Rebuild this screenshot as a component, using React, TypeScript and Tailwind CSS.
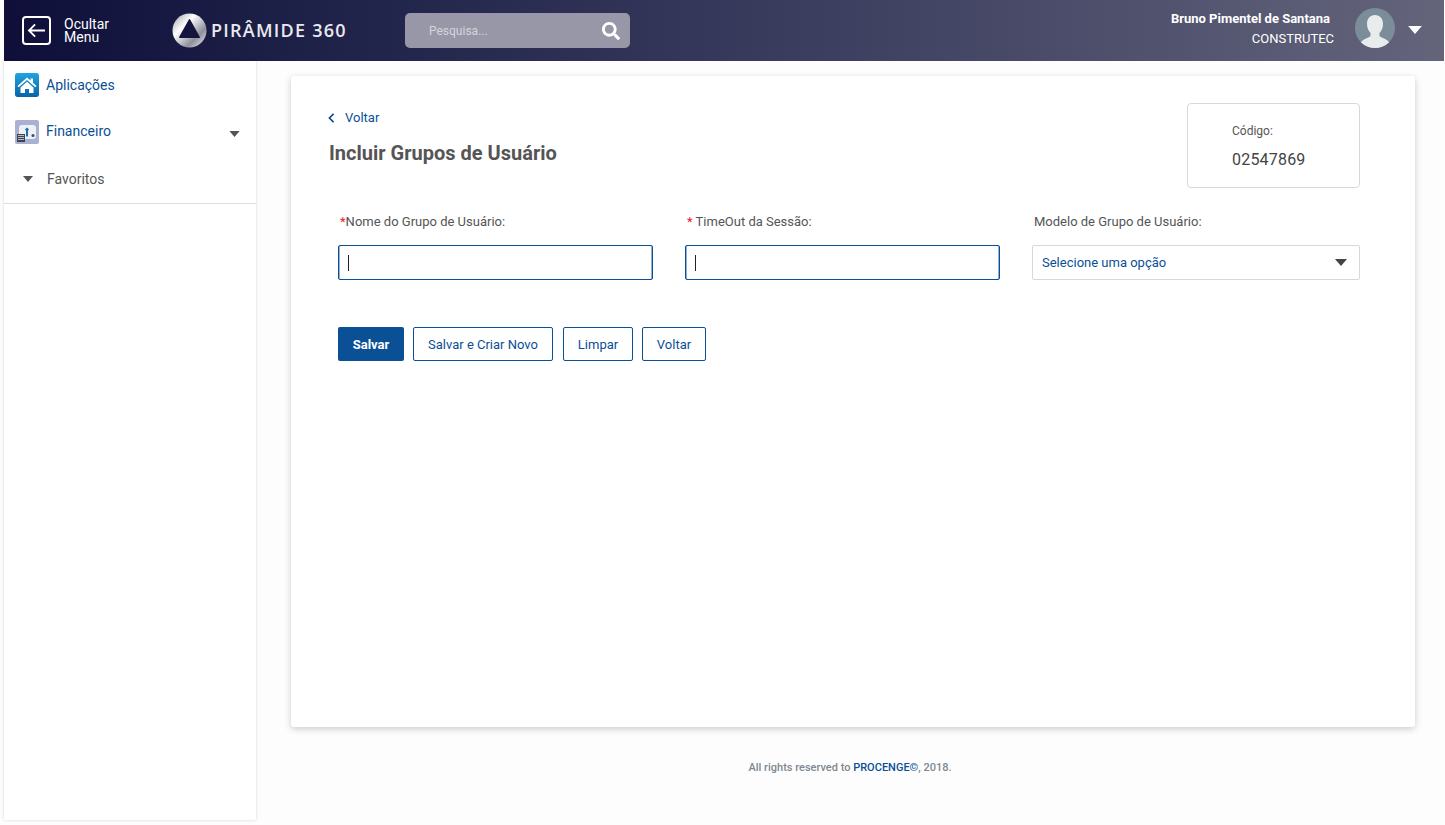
import { FaSearch } from "react-icons/fa";

function Caret({ className }: { className: string }) {
  return (
    <svg viewBox="0 0 12 7" className={className}>
      <path d="M0 0h12L6 7z" fill="currentColor" />
    </svg>
  );
}

function Logo() {
  return (
    <svg viewBox="0 0 36 36" className="w-[35px] h-[35px]">
      <defs>
        <linearGradient id="ring" x1="0" y1="0" x2="1" y2="1">
          <stop offset="0" stopColor="#9a9aa8" />
          <stop offset="0.35" stopColor="#ffffff" />
          <stop offset="0.7" stopColor="#8f8f9c" />
          <stop offset="1" stopColor="#f2f2f4" />
        </linearGradient>
      </defs>
      <circle cx="18" cy="18" r="17.5" fill="url(#ring)" />
      <path d="M18 7L28 25H8z" fill="#14143f" stroke="#14143f" strokeWidth="1.5" strokeLinejoin="round" />
    </svg>
  );
}

function HomeIcon() {
  return (
    <svg viewBox="0 0 24 24" className="w-6 h-6 rounded-[2px]">
      <defs>
        <linearGradient id="homeBg" x1="0" y1="0" x2="0" y2="1">
          <stop offset="0" stopColor="#20a4e0" />
          <stop offset="1" stopColor="#0a62a8" />
        </linearGradient>
      </defs>
      <rect width="24" height="24" rx="2" fill="url(#homeBg)" />
      <path d="M2.500 13L12 4.500l3.500 3V5.500h2.500v4.200L21.500 13l-1.200 1.200L12 7 3.700 14.200z" fill="#fff" />
      <path d="M5.500 14.500L12 8.800l6.500 5.700V20h-4.500v-4h-4v4H5.500z" fill="#fff" />
    </svg>
  );
}

function FinanceIcon() {
  return (
    <svg viewBox="0 0 24 24" className="w-6 h-6">
      <rect width="24" height="24" rx="2" fill="#a9b0d2" />
      <rect x="4" y="5" width="17" height="14" rx="3" fill="#eef0f6" />
      <path d="M10 9.500l2-2 2 2-1 1v6h-2v-6z" fill="#1d6fa8" />
      <circle cx="18" cy="15.500" r="1.500" fill="#2a4f7c" />
      <rect x="2" y="14" width="8" height="8" fill="#3c4352" />
      <path d="M3 15.500h6M3 17.500h6M3 19.500h6" stroke="#d7dbe6" strokeWidth="0.8" />
    </svg>
  );
}

function Avatar() {
  return (
    <svg viewBox="0 0 40 40" className="w-10 h-10 rounded-full">
      <rect width="40" height="40" fill="#7a8d99" />
      <path
        d="M20 7c5 0 8 3.500 8 9 0 4-1.500 7-3.500 9v3c2 2 8 3 10 7a20 20 0 0 1-29 0c2-4 8-5 10-7v-3c-2-2-3.500-5-3.500-9 0-5.500 3-9 8-9z"
        fill="#e8ecec"
      />
    </svg>
  );
}

function Field({ label, star }: { label: string; star: string }) {
  return (
    <div className="w-[315px]">
      <label className="block h-[34px] pl-0.5 text-[13px] leading-[22px] text-[#555555]">
        <span className="text-[#f02020]">{star}</span>
        {label}
      </label>
      <div className="h-[35px] border border-[#0b4f96] rounded-[2px] shadow-[inset_1px_0_0_#8fb0d4,inset_-1px_0_0_#8fb0d4] flex items-center pl-[9px]">
        <div className="w-px h-4 bg-[#222222]"></div>
      </div>
    </div>
  );
}

export default function App() {
  return (
    <div className="h-[825px] w-full overflow-hidden pl-1 pr-px bg-[#fdfdfd] text-[#555555] font-['Roboto',sans-serif]">
      <header className="h-[61px] flex items-center bg-gradient-to-r from-[#0f0f3a] to-[#64647b] text-white">
        <div className="ml-[18px] w-[29px] h-[29px] border-2 border-white rounded-[4px] flex items-center justify-center">
          <svg viewBox="0 0 20 16" className="w-[19px] h-[15px]" fill="none" stroke="currentColor" strokeWidth="2">
            <path d="M19 8H2M8.500 1.500L2 8l6.500 6.500" />
          </svg>
        </div>
        <div className="ml-[13px] w-[108px] text-[14px] leading-[13px]">
          Ocultar
          <br />
          Menu
        </div>
        <Logo />
        <div className="ml-[4px] w-[194px] font-['Open_Sans',sans-serif] text-[18px] font-semibold tracking-[1.25px] text-[#e9e9ee] whitespace-nowrap">
          PIRÂMIDE 360
        </div>
        <div className="w-[225px] h-[35px] rounded-[5px] bg-[#9897a7] flex items-center justify-between pl-6 pr-[10px]">
          <span className="text-[12px] text-[#d4d4dc]">Pesquisa...</span>
          <FaSearch className="text-white w-[18px] h-[18px]" />
        </div>
        <div className="ml-auto mb-[4px] text-right">
          <div className="mr-[4px] text-[13px] leading-[20px] font-bold whitespace-nowrap">Bruno Pimentel de Santana</div>
          <div className="text-[13px] leading-[20px] whitespace-nowrap">CONSTRUTEC</div>
        </div>
        <div className="ml-[21px] mb-[6px]">
          <Avatar />
        </div>
        <Caret className="ml-[13px] mr-[22px] mb-[2px] w-[14px] h-[8px] text-white" />
      </header>

      <div className="flex">
        <aside className="w-[252px] h-[759px] shrink-0 bg-white shadow-[0_0_3px_rgba(0,0,0,0.16)]">
          <div className="h-[143px] border-b border-[#dddddd]">
            <div className="h-[48px] pt-[12px] pl-[11px] flex items-start gap-2">
              <HomeIcon />
              <span className="text-[14px] leading-[24px] text-[#0b4f96] -ml-px">Aplicações</span>
            </div>
            <div className="h-[46px] pl-[11px] pr-[16px] flex items-center">
              <FinanceIcon />
              <span className="ml-[7px] text-[14px] text-[#0b4f96] -translate-y-px">Financeiro</span>
              <Caret className="ml-auto mt-1 w-[11px] h-[6px] text-[#555555]" />
            </div>
            <div className="h-[48px] pl-[19px] flex items-center">
              <Caret className="w-[10px] h-[6px] text-[#555555]" />
              <span className="ml-[14px] text-[14px] text-[#555555]">Favoritos</span>
            </div>
          </div>
        </aside>

        <main className="ml-[35px] mt-[15px] w-[1124px]">
          <section className="h-[651px] rounded-[3px] bg-white px-[37px] pt-[27px] shadow-[0_2px_7px_rgba(0,0,0,0.2)]">
            <div className="flex justify-between h-[85px] pr-[18px]">
              <div>
                <div className="flex items-center gap-[10px] h-[28px] pt-[2px] text-[13px] text-[#0b4f96]">
                  <svg viewBox="0 0 8 12" className="w-[7px] h-[10px]" fill="none" stroke="currentColor" strokeWidth="2">
                    <path d="M6.500 1L1.500 6l5 5" />
                  </svg>
                  Voltar
                </div>
                <h1 className="mt-[8px] ml-px text-[20px] leading-[28px] font-bold text-[#555555]">Incluir Grupos de Usuário</h1>
              </div>
              <div className="w-[173px] h-[85px] border border-[#d5d9de] rounded-[4px] pl-[44px] pt-[19px]">
                <div className="text-[12px] leading-[16px] text-[#555555]">Código:</div>
                <div className="mt-[11px] text-[16px] leading-[20px] tracking-[0.2px] text-[#444444]">02547869</div>
              </div>
            </div>

            <div className="mt-[23px] ml-[10px] flex gap-[32px]">
              <Field star="*" label="Nome do Grupo de Usuário:" />
              <Field star="* " label="TimeOut da Sessão:" />
              <div className="w-[328px]">
                <label className="block h-[34px] pl-0.5 text-[13px] leading-[22px] text-[#555555]">Modelo de Grupo de Usuário:</label>
                <div className="h-[35px] border border-[#d5d9de] rounded-[2px] flex items-center justify-between pl-[9px] pr-[12px]">
                  <span className="text-[13px] text-[#0b4f96]">Selecione uma opção</span>
                  <Caret className="w-[12px] h-[7px] text-[#444444]" />
                </div>
              </div>
            </div>

            <div className="mt-[47px] ml-[10px] flex gap-[9px]">
              <button type="button" className="w-[66px] h-[34px] pt-[2px] rounded-[2px] bg-[#0b4f96] text-[13px] font-bold text-white">
                Salvar
              </button>
              <button type="button" className="w-[140px] h-[34px] pt-[2px] rounded-[2px] border border-[#0b4f96] text-[13px] text-[#0b4f96]">
                Salvar e Criar Novo
              </button>
              <button type="button" className="ml-px w-[70px] h-[34px] pt-[2px] rounded-[2px] border border-[#0b4f96] text-[13px] text-[#0b4f96]">
                Limpar
              </button>
              <button type="button" className="w-[64px] h-[34px] pt-[2px] rounded-[2px] border border-[#0b4f96] text-[13px] text-[#0b4f96]">
                Voltar
              </button>
            </div>
          </section>
          <footer className="mt-[34px] pr-[6px] text-center text-[11px] leading-[14px] font-medium text-[#808890]">
            All rights reserved to <span className="text-[#0b4f96]">PROCENGE©</span>, 2018.
          </footer>
        </main>
      </div>
    </div>
  );
}
